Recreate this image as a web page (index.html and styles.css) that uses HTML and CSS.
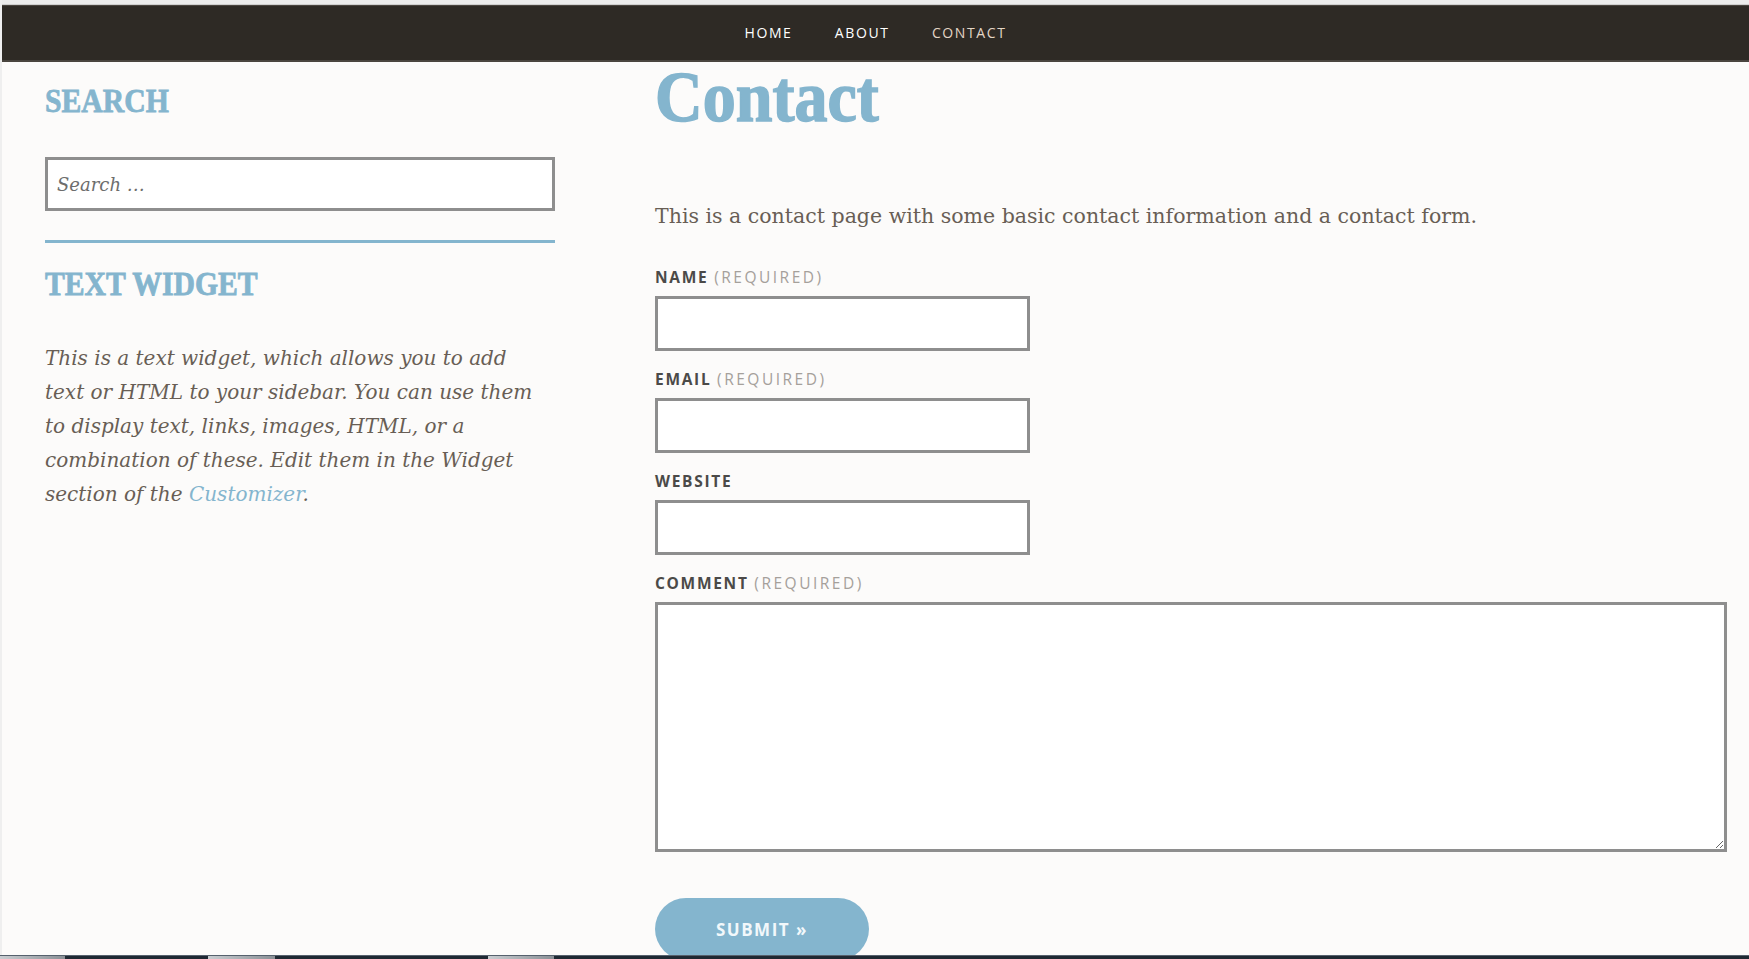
FILE: index.html
```html
<!DOCTYPE html>
<html lang="en">
<head>
<meta charset="utf-8">
<title>Contact</title>
<link rel="stylesheet" href="styles.css">
</head>
<body>
<div class="frame">
  <div class="chrome-top"></div>
  <nav class="topnav">
    <a class="navlink" href="#">Home</a>
    <a class="navlink" href="#">About</a>
    <a class="navlink navlink-current" href="#">Contact</a>
  </nav>
  <div class="page">
    <aside class="sidebar">
      <section class="widget widget-search">
        <h2 class="widget-title">Search</h2>
        <form class="search-form">
          <input class="search-field" type="text" placeholder="Search …">
        </form>
      </section>
      <section class="widget widget-text">
        <h2 class="widget-title">Text Widget</h2>
        <p class="widget-body">This is a text widget, which allows you to add<br>text or HTML to your sidebar. You can use them<br>to display text, links, images, HTML, or a<br>combination of these. Edit them in the Widget<br>section of the <a class="link" href="#">Customizer</a>.</p>
      </section>
    </aside>
    <main class="content">
      <h1 class="entry-title">Contact</h1>
      <p class="intro">This is a contact page with some basic contact information and a contact form.</p>
      <form class="contact-form">
        <label class="field-label">Name <span class="req">(required)</span></label>
        <input class="text-input" type="text">
        <label class="field-label">Email <span class="req">(required)</span></label>
        <input class="text-input" type="text">
        <label class="field-label">Website</label>
        <input class="text-input" type="text">
        <label class="field-label">Comment <span class="req">(required)</span></label>
        <textarea class="comment-input"></textarea>
        <button class="submit-btn" type="button">Submit »</button>
      </form>
    </main>
  </div>
</div>
<div class="taskbar">
  <span class="tb-btn tb-1"></span>
  <span class="tb-btn tb-2"></span>
  <span class="tb-btn tb-3"></span>
</div>
</body>
</html>
```

FILE: styles.css
```css
html, body {
  margin: 0;
  padding: 0;
  background: #fcfbfa;
}

.frame {
  border-left: 2px solid #efefef;
  min-height: 100vh;
  background: #fcfbfa;
}

.chrome-top {
  height: 4px;
  background: #ececec;
  border-bottom: 1px solid #cfcfcf;
}

.topnav {
  display: flex;
  justify-content: center;
  align-items: center;
  gap: 42.4px;
  height: 54px;
  background: #2e2a25;
  border-top: 1px solid #4a453f;
  border-bottom: 2px solid #4a453f;
}

.navlink {
  font-family: "Open Sans", "Liberation Sans", sans-serif;
  font-weight: 500;
  font-size: 14px;
  line-height: 20px;
  letter-spacing: 1.6px;
  text-transform: uppercase;
  color: #ffffff;
  text-decoration: none;
  margin-top: -1px;
}

.navlink-current {
  color: #e4d6c6;
}

.page {
  display: grid;
  grid-template-columns: 510px 1072px;
  column-gap: 100px;
  padding-left: 43px;
}

/* Sidebar */
.sidebar {
  padding-top: 19px;
}

.widget-title {
  margin: 0;
  font-family: "Liberation Serif", serif;
  font-weight: 700;
  font-size: 33px;
  line-height: 40px;
  letter-spacing: 0;
  text-transform: uppercase;
  color: #84b5ce;
  -webkit-text-stroke: 0.8px #84b5ce;
  transform: scaleX(0.9);
  transform-origin: left center;
  white-space: nowrap;
}

.widget-search {
  padding-bottom: 29px;
  border-bottom: 3px solid #84b5ce;
}

.search-form {
  margin: 36px 0 0;
}

.search-field {
  display: block;
  box-sizing: border-box;
  width: 100%;
  height: 54px;
  margin: 0;
  padding: 0 9px;
  border: 3px solid #8e8e8e;
  border-radius: 0;
  background: #ffffff;
  font-family: "DejaVu Serif", serif;
  font-style: italic;
  font-size: 18px;
  color: #555;
  outline: none;
}

.search-field::placeholder {
  color: #6d6d6d;
  opacity: 1;
}

.widget-text {
  padding-top: 21px;
}

.widget-body {
  margin: 37px 0 0;
  font-family: "DejaVu Serif", serif;
  font-style: italic;
  font-size: 20px;
  line-height: 34px;
  color: #685e55;
  white-space: nowrap;
}

.link {
  color: #84b5ce;
  text-decoration: none;
}

/* Main content */
.content {
  padding-top: 0;
}

.entry-title {
  margin: 0;
  font-family: "Liberation Serif", serif;
  font-weight: 700;
  font-size: 71px;
  line-height: 71px;
  letter-spacing: 0;
  color: #84b5ce;
  -webkit-text-stroke: 1.5px #84b5ce;
  transform: scaleX(0.93);
  transform-origin: left center;
}

.intro {
  margin: 66px 0 0;
  font-family: "DejaVu Serif", serif;
  font-size: 20.5px;
  line-height: 34px;
  color: #685e55;
}

.contact-form {
  display: flex;
  flex-direction: column;
  align-items: flex-start;
  padding-top: 34px;
}

.field-label {
  display: block;
  margin: 0 0 9px;
  font-family: "Open Sans", "Liberation Sans", sans-serif;
  font-weight: 700;
  font-size: 15.5px;
  line-height: 20px;
  letter-spacing: 1.7px;
  text-transform: uppercase;
  color: #4b4a48;
}

.req {
  font-weight: 400;
  letter-spacing: 2.5px;
  color: #a5a09b;
}

.text-input {
  display: block;
  box-sizing: border-box;
  width: 375px;
  height: 55px;
  margin: 0 0 18px;
  padding: 0 10px;
  border: 3px solid #8e8e8e;
  border-radius: 0;
  background: #ffffff;
  outline: none;
}

.comment-input {
  display: block;
  box-sizing: border-box;
  width: 100%;
  height: 250px;
  margin: 0;
  padding: 10px;
  border: 3px solid #8e8e8e;
  border-radius: 0;
  background: #ffffff;
  outline: none;
  resize: vertical;
}

.submit-btn {
  margin-top: 46px;
  width: 214px;
  height: 62px;
  border: none;
  border-radius: 31px;
  background: #84b5ce;
  font-family: "Open Sans", "Liberation Sans", sans-serif;
  font-weight: 700;
  font-size: 17px;
  letter-spacing: 1.5px;
  text-transform: uppercase;
  color: #f2f8fb;
  cursor: pointer;
}

/* OS taskbar peeking at the bottom */
.taskbar {
  position: fixed;
  left: 0;
  right: 0;
  bottom: 0;
  height: 3px;
  display: flex;
  background: #1f2933;
  border-top: 1px solid #56616d;
}

.tb-btn {
  height: 100%;
  background: linear-gradient(90deg, #c9cdd1, #8a9096);
}

.tb-1 { width: 65px; }
.tb-2 { width: 67px; margin-left: 143px; }
.tb-3 { width: 66px; margin-left: 213px; }
```
